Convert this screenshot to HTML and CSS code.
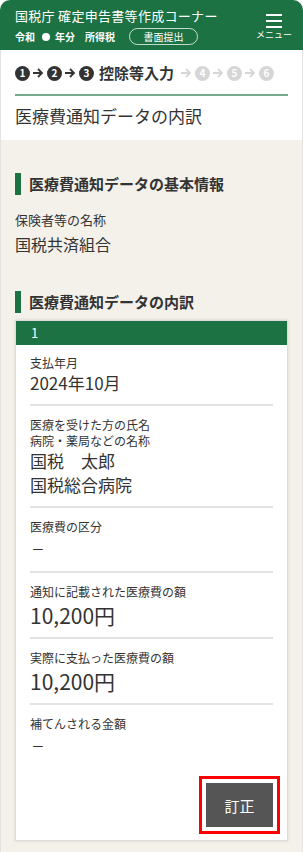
FILE: index.html
```html
<!DOCTYPE html>
<html lang="ja">
<head>
  <meta charset="UTF-8">
  <meta name="viewport" content="width=device-width, initial-scale=1.0">
  <title>医療費通知データの内訳</title>
  <link rel="stylesheet" href="styles.css">
</head>
<body>

  <!-- Header -->
  <header class="header">
    <div class="header-left">
      <div class="site-title">国税庁 確定申告書等作成コーナー</div>
      <div class="header-info">
        <span>令和</span>
        <span class="year-dot"></span>
        <span>年分</span>
        <span class="tax-type">所得税</span>
        <span class="paper-btn">書面提出</span>
      </div>
    </div>
    <div class="menu">
      <div class="menu-lines"><span></span><span></span><span></span></div>
      <div class="menu-label">メニュー</div>
    </div>
  </header>

  <div class="main">
    <!-- Steps -->
    <div class="steps">
      <span class="step done">1</span>
      <svg class="arrow" viewBox="0 0 11 10"><path d="M0 5H9M5 1L9 5L5 9" /></svg>
      <span class="step done">2</span>
      <svg class="arrow" viewBox="0 0 11 10"><path d="M0 5H9M5 1L9 5L5 9" /></svg>
      <span class="step done">3</span>
      <span class="step-name">控除等入力</span>
      <svg class="arrow off" viewBox="0 0 11 10"><path d="M0 5H9M5 1L9 5L5 9" /></svg>
      <span class="step">4</span>
      <svg class="arrow off" viewBox="0 0 11 10"><path d="M0 5H9M5 1L9 5L5 9" /></svg>
      <span class="step">5</span>
      <svg class="arrow off" viewBox="0 0 11 10"><path d="M0 5H9M5 1L9 5L5 9" /></svg>
      <span class="step">6</span>
    </div>

    <h1 class="page-title">医療費通知データの内訳</h1>

    <div class="content">
      <h2 class="section-title">医療費通知データの基本情報</h2>
      <div class="field-label">保険者等の名称</div>
      <div class="field-value">国税共済組合</div>

      <h2 class="section-title second">医療費通知データの内訳</h2>

      <div class="card">
        <div class="card-head">1</div>
        <div class="card-body">
          <div class="item">
            <div class="label">支払年月</div>
            <div class="value">2024年10月</div>
          </div>
          <div class="item">
            <div class="label">医療を受けた方の氏名</div>
            <div class="label">病院・薬局などの名称</div>
            <div class="value">国税　太郎</div>
            <div class="value">国税総合病院</div>
          </div>
          <div class="item">
            <div class="label">医療費の区分</div>
            <div class="value dash">ー</div>
          </div>
          <div class="item">
            <div class="label">通知に記載された医療費の額</div>
            <div class="value amount">10,200円</div>
          </div>
          <div class="item">
            <div class="label">実際に支払った医療費の額</div>
            <div class="value amount">10,200円</div>
          </div>
          <div class="item last">
            <div class="label">補てんされる金額</div>
            <div class="value dash">ー</div>
          </div>
          <div class="actions">
            <button class="fix-btn" type="button">訂正</button>
          </div>
        </div>
      </div>
    </div>
  </div>

</body>
</html>
```

FILE: styles.css
```css
/* General Reset */
* {
  margin: 0;
  padding: 0;
  box-sizing: border-box;
}

body {
  font-family: "Noto Sans CJK JP", "Noto Sans", sans-serif;
  color: #333;
  background-color: #fff;
}

/* Header */
.header {
  display: flex;
  justify-content: space-between;
  height: 50px;
  background-color: #1c7243;
  color: #fff;
  border-radius: 10px 10px 0 0;
}

.header-left {
  padding: 8px 0 0 15px;
}

.site-title {
  font-size: 13px;
  line-height: 16px;
  letter-spacing: 0.3px;
}

.header-info {
  display: flex;
  align-items: center;
  height: 17px;
  margin-top: 4px;
  font-size: 10px;
  font-weight: bold;
}

.year-dot {
  width: 8px;
  height: 8px;
  margin: 0 5px 0 7px;
  border-radius: 50%;
  background-color: #fff;
}

.tax-type {
  margin-left: 10px;
}

.paper-btn {
  display: flex;
  align-items: center;
  justify-content: center;
  width: 69px;
  height: 17px;
  margin-left: 14px;
  border: 1px solid rgba(255, 255, 255, 0.75);
  border-radius: 9px;
  font-weight: normal;
}

.menu {
  display: flex;
  flex-direction: column;
  align-items: center;
  padding: 14px 11px 0 0;
}

.menu-lines {
  display: flex;
  flex-direction: column;
  justify-content: space-between;
  width: 16px;
  height: 14px;
}

.menu-lines span {
  height: 2px;
  background-color: #fff;
}

.menu-label {
  margin-top: 1px;
  font-size: 9px;
  line-height: 12px;
}

/* Main area */
.main {
  border-left: 1px solid #e3e3e3;
  border-right: 1px solid #e3e3e3;
}

.steps {
  display: flex;
  align-items: center;
  height: 46px;
  margin: 0 14px;
  padding-top: 2px;
  border-bottom: 2px solid #74aa8b;
}

.step {
  display: flex;
  align-items: center;
  justify-content: center;
  width: 15px;
  height: 15px;
  border-radius: 50%;
  background-color: #d6d6d6;
  color: #fff;
  font-size: 10px;
  font-weight: bold;
  line-height: 1;
}

.step.done {
  background-color: #333;
}

.step-name {
  margin: 0 4px 0 5px;
  font-size: 15px;
  font-weight: bold;
  line-height: 20px;
}

.arrow {
  width: 11px;
  height: 10px;
  margin: 0 3px;
  fill: none;
  stroke: #333;
  stroke-width: 1.8;
}

.arrow.off {
  stroke: #d6d6d6;
}

.page-title {
  padding: 8px 14px 12px;
  font-size: 17px;
  font-weight: normal;
  line-height: 24px;
}

/* Content */
.content {
  padding: 33px 14px 13px;
  background-color: #f4f1eb;
}

.section-title {
  height: 22px;
  padding-left: 8px;
  border-left: 6px solid #1c7243;
  font-size: 15px;
  line-height: 22px;
}

.section-title.second {
  margin-top: 35px;
}

.field-label {
  margin-top: 16px;
  font-size: 13px;
  line-height: 18px;
}

.field-value {
  margin-top: 3px;
  font-size: 16px;
  line-height: 24px;
}

/* Card */
.card {
  margin-top: 7px;
  background-color: #fff;
  border: 1px solid #dcdcdc;
  box-shadow: 0 0 3px rgba(0, 0, 0, 0.12);
}

.card-head {
  height: 24px;
  padding-left: 15px;
  background-color: #1c7243;
  color: #fff;
  font-size: 13px;
  line-height: 24px;
}

.card-body {
  padding: 0 14px 13px;
}

.item {
  padding: 10px 0 9px;
  border-bottom: 2px solid #e3e3e3;
}

.item + .item {
  padding-top: 11px;
}

.item.last {
  border-bottom: none;
}

.label {
  font-size: 12px;
  line-height: 16px;
}

.value {
  font-size: 17px;
  line-height: 24px;
}

.value.dash {
  margin-top: 3px;
  padding-left: 2px;
  font-size: 12px;
}

.value.amount {
  margin-top: 2px;
  font-size: 21px;
  line-height: 26px;
}

.actions {
  display: flex;
  justify-content: flex-end;
  margin-top: 15px;
}

.fix-btn {
  width: 67px;
  height: 44px;
  border: none;
  border-radius: 0;
  background-color: #555;
  color: #fff;
  font-family: inherit;
  font-size: 15px;
  outline: 3px solid #f00;
  outline-offset: 4px;
  cursor: pointer;
}
```
